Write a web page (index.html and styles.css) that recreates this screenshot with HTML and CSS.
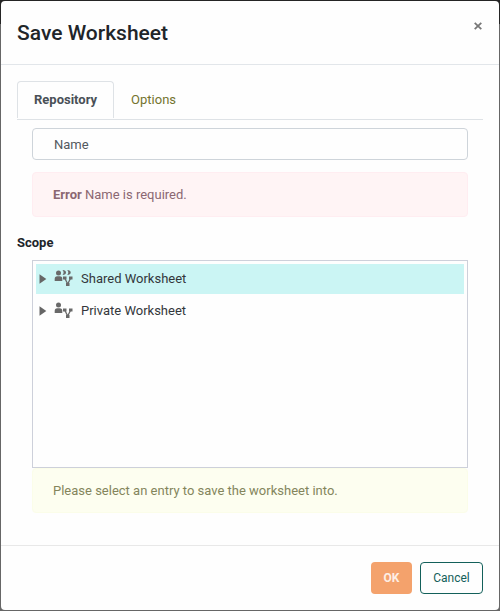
FILE: index.html
```html
<!DOCTYPE html>
<html lang="en">
<head>
<meta charset="utf-8">
<title>Save Worksheet</title>
<link rel="stylesheet" href="styles.css">
</head>
<body>
<div class="modal">
  <header class="modal-header">
    <h1 class="title">Save Worksheet</h1>
    <button class="close" aria-label="Close"><svg width="8" height="8" viewBox="0 0 8 8"><path d="M.7.9l6.600 6.200M7.300.9L.7 7.100"/></svg></button>
  </header>
  <main class="modal-body">
    <nav class="tabs">
      <a class="tab active">Repository</a>
      <a class="tab">Options</a>
    </nav>
    <div class="name-field">Name</div>
    <div class="alert alert-danger"><b>Error</b> Name is required.</div>
    <h2 class="scope">Scope</h2>
    <div class="tree">
      <div class="node selected">
        <svg class="caret" width="8" height="10" viewBox="0 0 8 10"><path d="M.5.3v9.400L7.300 5z"/></svg>
        <svg class="icon" width="19" height="18" viewBox="0 0 19 18">
          <circle cx="4.500" cy="3" r="2.500"/>
          <path d="M.7 11V9Q.7 6.300 3.200 6.300h2.600q2.500 0 2.500 2.700v2z"/>
          <path d="M8.500 0q3.500.2 3.500 2.500T8.500 5q2.200-2.500 0-5zM13.200 0q3.500.2 3.500 2.500T13.200 5q2.200-2.500 0-5z"/>
          <path class="link" d="M10.700 8l3 6 3-6"/>
          <path d="M9 6.500h3.500v3H9zM15 6.500h3.500v3H15zM12 13h3.500v3H12z"/>
        </svg>
        <span>Shared Worksheet</span>
      </div>
      <div class="node">
        <svg class="caret" width="8" height="10" viewBox="0 0 8 10"><path d="M.5.3v9.400L7.300 5z"/></svg>
        <svg class="icon" width="19" height="18" viewBox="0 0 19 18">
          <circle cx="4.500" cy="3" r="2.500"/>
          <path d="M.7 11V9Q.7 6.300 3.200 6.300h2.600q2.500 0 2.500 2.700v2z"/>
          <path class="link" d="M10.700 8l3 6 3-6"/>
          <path d="M9 6.500h3.500v3H9zM15 6.500h3.500v3H15zM12 13h3.500v3H12z"/>
        </svg>
        <span>Private Worksheet</span>
      </div>
    </div>
    <div class="alert alert-info">Please select an entry to save the worksheet into.</div>
  </main>
  <footer class="modal-footer">
    <button class="btn btn-ok">OK</button>
    <button class="btn btn-cancel">Cancel</button>
  </footer>
</div>
</body>
</html>
```
FILE: styles.css
```css
* { box-sizing: border-box; }
body {
  margin: 0;
  height: 611px;
  padding: 1px;
  overflow: hidden;
  background: linear-gradient(#242424 24px, #666 24px);
  font: 13px/20px Roboto, sans-serif;
  color: #212529;
}
.modal {
  height: 609px;
  display: flex;
  flex-direction: column;
  background: #fefefe;
  border-radius: 4px;
}
.modal-header {
  height: 64px;
  flex: none;
  display: flex;
  justify-content: space-between;
  padding: 16px;
  border-bottom: 1px solid #e2e6ea;
}
.title { margin: 0; font-size: 21px; line-height: 32px; font-weight: 500; }
.close { display: flex; border: 0; padding: 0; margin: 5px 1px 0 0; height: 8px; background: none; }
.close path { stroke: #777; stroke-width: 1.8; fill: none; }
.modal-body { flex: 1; padding: 16px 16px 0; }
.tabs { display: flex; height: 39px; border-bottom: 1px solid #dee2e6; }
.tab {
  height: 37px;
  padding: 8px 16px;
  border: 1px solid transparent;
  border-bottom: 0;
  color: #74742f;
}
.tab.active {
  border-color: #dee2e6;
  border-radius: 4px 4px 0 0;
  color: #495057;
  font-weight: 700;
}
.name-field {
  height: 32px;
  margin: 8px 15px 12px;
  padding: 6px 21px;
  border: 1px solid #ced4da;
  border-radius: 4px;
  line-height: 20px;
  color: #53595f;
}
.alert {
  height: 45px;
  margin: 0 15px;
  padding: 12px 20px;
  border: 1px solid;
  border-radius: 4px;
}
.alert-danger { color: #8b6772; background: #fff4f5; border-color: #ffedf1; }
.alert-info { color: #84855c; background: #fdfef0; border-color: #fbfde9; }
.scope { margin: 16px 0 7px; font-size: 13px; line-height: 20px; font-weight: 700; }
.tree {
  height: 208px;
  margin: 0 15px;
  padding: 3px;
  border: 1px solid #cdd0da;
}
.node { height: 30px; margin-bottom: 2px; display: flex; align-items: center; color: #33373b; }
.node.selected { background: #cbf5f4; }
.caret { margin-left: 3px; fill: #666; }
.icon { margin: 0 8px 0 7px; fill: #696969; }
.icon .link { fill: none; stroke: #696969; stroke-width: 1.3; }
.modal-footer {
  height: 65px;
  flex: none;
  display: flex;
  justify-content: flex-end;
  gap: 8px;
  padding: 16px 16px 0;
  border-top: 1px solid #e8e8e8;
}
.btn { height: 32px; padding: 0; border-radius: 4px; font: 12px/20px Roboto, sans-serif; }
.btn-ok { width: 41px; border: 0; background: #f4a26c; color: #fdeee4; font-weight: 700; }
.btn-cancel { width: 63px; border: 1px solid #13605a; background: #fefefe; color: #13605a; }
```
